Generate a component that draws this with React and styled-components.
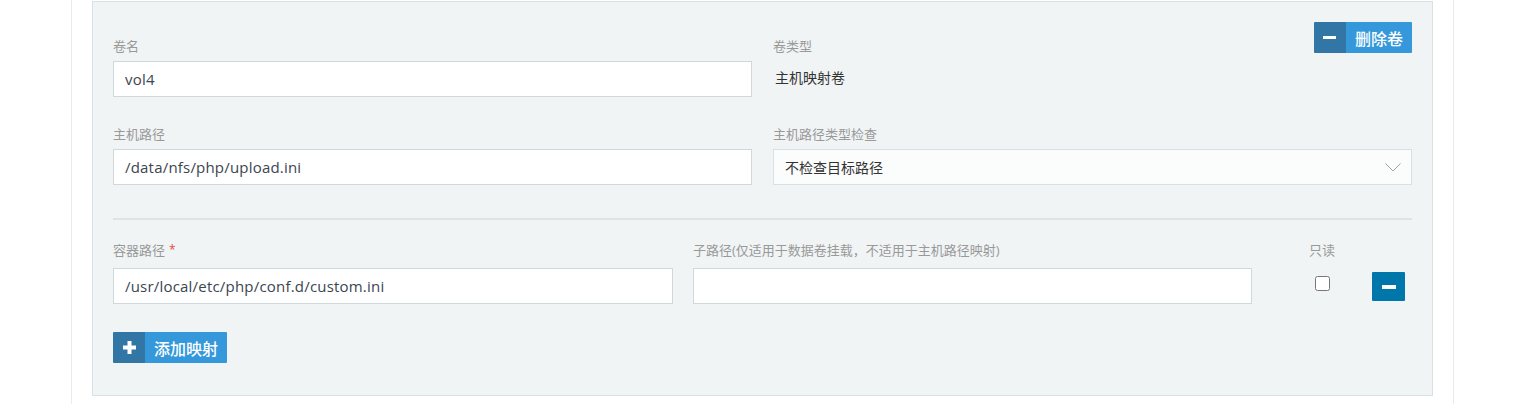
import styled, { createGlobalStyle } from "styled-components";

const GlobalStyle = createGlobalStyle`
    body {
        margin: 0;
        background: #fff;
        font-family: "Open Sans", "Noto Sans CJK SC", sans-serif;
        color: #333;
    }
`;

const Page = styled.div`
    box-sizing: border-box;
    margin-left: 71px;
    width: 1383px;
    min-height: 404px;
    padding: 1px 20px 0;
    border-left: 1px solid #e8ecee;
    border-right: 1px solid #e8ecee;
`;

const Panel = styled.div`
    position: relative;
    box-sizing: border-box;
    padding: 35px 20px 32px;
    background: #f0f4f5;
    border: 1px solid #dae1e4;
`;

const Row = styled.div`
    display: grid;
    grid-template-columns: 639px 639px;
    column-gap: 21px;
    margin-bottom: ${p => p.$gap || 0}px;
`;

const Field = styled.div`
    display: flex;
    flex-direction: column;
    align-items: ${p => (p.$center ? "center" : "stretch")};
    width: ${p => (p.$width ? `${p.$width}px` : "auto")};
    flex: none;
`;

const Label = styled.label`
    display: block;
    font-size: 13px;
    line-height: 18px;
    color: #999;
    margin-bottom: ${p => p.$space || 6}px;
    white-space: nowrap;
`;

const Required = styled.span`
    color: #e74c3c;
    margin-left: 4px;
    font-size: 12px;
    vertical-align: 1px;
`;

const Input = styled.input`
    box-sizing: border-box;
    height: 36px;
    width: 100%;
    padding: 0 11px;
    border: 1px solid #cfd8dc;
    background: #fff;
    font-family: inherit;
    font-size: 15px;
    letter-spacing: 0.2px;
    color: #3b4550;
    outline: none;
`;

const StaticValue = styled.div`
    height: 36px;
    line-height: 34px;
    padding-left: 2px;
    font-size: 14px;
    color: #333;
`;

const SelectBox = styled.div`
    box-sizing: border-box;
    height: 36px;
    display: flex;
    align-items: center;
    justify-content: space-between;
    padding: 0 10px 0 11px;
    border: 1px solid #d8e0e3;
    background: #fbfcfc;
    font-size: 14px;
    color: #333;
`;

const Divider = styled.div`
    height: 2px;
    background: #dde3e6;
    margin: 33px 0 21px;
`;

const MapRow = styled.div`
    display: flex;
    align-items: flex-start;
    gap: 20px;
`;

const Check = styled.input`
    width: 15px;
    height: 15px;
    margin: 8px 0 0;
`;

const IconButton = styled.button`
    width: 33px;
    height: 29px;
    margin: 31px 0 0 -20px;
    padding: 0;
    border: none;
    border-radius: 1px;
    background: #0077aa;
    display: flex;
    align-items: center;
    justify-content: center;
    cursor: pointer;
`;

const Bar = styled.span`
    display: block;
    width: 14px;
    height: 4px;
    background: #fff;
`;

const SplitButton = styled.button`
    display: inline-flex;
    height: 31px;
    padding: 0;
    border: none;
    border-radius: 1px;
    overflow: hidden;
    font-family: inherit;
    cursor: pointer;
`;

const ButtonIcon = styled.span`
    width: 32px;
    background: #3276a6;
    display: flex;
    align-items: center;
    justify-content: center;
`;

const ButtonText = styled.span`
    background: #3498db;
    color: #fff;
    font-size: 16px;
    font-weight: 500;
    padding: 0 9px;
    display: flex;
    align-items: center;
`;

const TopAction = styled.div`
    position: absolute;
    top: 20px;
    right: 20px;
`;

const AddRow = styled.div`
    margin-top: 28px;
`;

const Minus = () => (
    <svg width="13" height="13" viewBox="0 0 13 13">
        <rect x="0" y="5" width="13" height="3" fill="#fff" />
    </svg>
);

const Plus = () => (
    <svg width="13" height="13" viewBox="0 0 13 13">
        <rect x="0" y="4.5" width="13" height="4" fill="#fff" />
        <rect x="4.5" y="0" width="4" height="13" fill="#fff" />
    </svg>
);

const Chevron = () => (
    <svg width="16" height="9" viewBox="0 0 16 9">
        <path d="M0.5 0.5 L8 8 L15.5 0.5" fill="none" stroke="#9aa3a8" strokeWidth="1" />
    </svg>
);

export default function App() {
    return (
        <>
            <GlobalStyle />
            <Page>
                <Panel>
                    <TopAction>
                        <SplitButton>
                            <ButtonIcon><Minus /></ButtonIcon>
                            <ButtonText>删除卷</ButtonText>
                        </SplitButton>
                    </TopAction>

                    <Row $gap={28}>
                        <Field>
                            <Label>卷名</Label>
                            <Input defaultValue="vol4" />
                        </Field>
                        <Field>
                            <Label>卷类型</Label>
                            <StaticValue>主机映射卷</StaticValue>
                        </Field>
                    </Row>

                    <Row>
                        <Field>
                            <Label>主机路径</Label>
                            <Input defaultValue="/data/nfs/php/upload.ini" />
                        </Field>
                        <Field>
                            <Label>主机路径类型检查</Label>
                            <SelectBox>
                                <span>不检查目标路径</span>
                                <Chevron />
                            </SelectBox>
                        </Field>
                    </Row>

                    <Divider />

                    <MapRow>
                        <Field $width={560}>
                            <Label $space={9}>容器路径<Required>*</Required></Label>
                            <Input defaultValue="/usr/local/etc/php/conf.d/custom.ini" />
                        </Field>
                        <Field $width={559}>
                            <Label $space={9}>子路径(仅适用于数据卷挂载，不适用于主机路径映射)</Label>
                            <Input defaultValue="" />
                        </Field>
                        <Field $width={100} $center>
                            <Label $space={9}>只读</Label>
                            <Check type="checkbox" />
                        </Field>
                        <IconButton><Bar /></IconButton>
                    </MapRow>

                    <AddRow>
                        <SplitButton>
                            <ButtonIcon><Plus /></ButtonIcon>
                            <ButtonText>添加映射</ButtonText>
                        </SplitButton>
                    </AddRow>
                </Panel>
            </Page>
        </>
    );
}
